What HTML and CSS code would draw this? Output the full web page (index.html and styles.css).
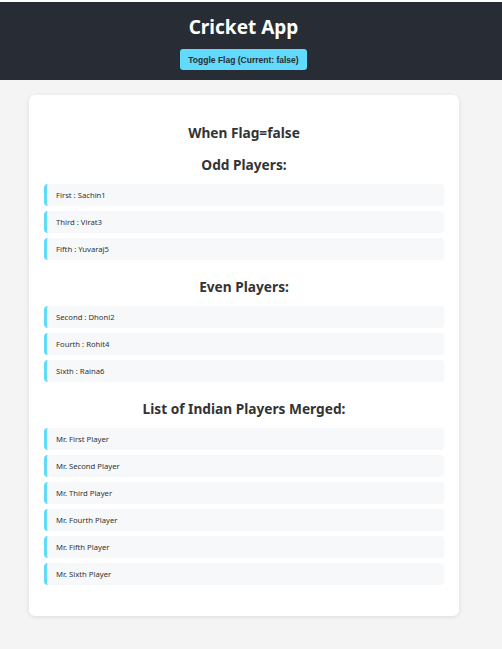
FILE: index.html
```html
<!DOCTYPE html>
<html>
<head>
<meta charset="utf-8">
<link rel="stylesheet" href="styles.css">
</head>
<body>
<header class="app-header">
  <h1 class="app-title">Cricket App</h1>
  <button class="toggle-btn">Toggle Flag (Current: false)</button>
</header>
<main class="card">
  <h3 class="flag-heading">When Flag=false</h3>
  <h3 class="section-heading first">Odd Players:</h3>
  <ul class="player-list">
    <li>First : Sachin1</li>
    <li>Third : Virat3</li>
    <li>Fifth : Yuvaraj5</li>
  </ul>
  <h3 class="section-heading">Even Players:</h3>
  <ul class="player-list">
    <li>Second : Dhoni2</li>
    <li>Fourth : Rohit4</li>
    <li>Sixth : Raina6</li>
  </ul>
  <h3 class="section-heading">List of Indian Players Merged:</h3>
  <ul class="player-list">
    <li>Mr. First Player</li>
    <li>Mr. Second Player</li>
    <li>Mr. Third Player</li>
    <li>Mr. Fourth Player</li>
    <li>Mr. Fifth Player</li>
    <li>Mr. Sixth Player</li>
  </ul>
</main>
</body>
</html>
```
FILE: styles.css
```css
html, body {
  margin: 0;
  padding: 0;
}
body {
  background: #f4f4f4;
  font-family: "Noto Sans", "Open Sans", sans-serif;
  color: #333;
  border-top: 2px solid #ffffff;
  min-height: 647px;
}
.app-header {
  background: #282c34;
  height: 78px;
  padding-right: 15px;
  display: flex;
  flex-direction: column;
  align-items: center;
}
.app-title {
  margin: 13px 0 0;
  font-size: 19px;
  line-height: 24px;
  font-weight: 700;
  color: #ffffff;
}
.toggle-btn {
  margin-top: 10px;
  height: 21px;
  width: 127px;
  padding: 0;
  border: none;
  border-radius: 3px;
  background: #61dafb;
  color: #282c34;
  font-family: "Liberation Sans", Arial, sans-serif;
  font-size: 8.5px;
  font-weight: 700;
}
.card {
  display: block;
  width: 430px;
  box-sizing: border-box;
  margin: 15px 0 0 29px;
  padding: 28px 15px 31px;
  background: #ffffff;
  border-radius: 6px;
  box-shadow: 0 1px 4px rgba(0, 0, 0, 0.1);
}
.flag-heading, .section-heading {
  margin: 0;
  text-align: center;
  font-size: 13.7px;
  line-height: 20px;
  font-weight: 700;
  color: #333;
}
.section-heading {
  margin-top: 17px;
  margin-bottom: 9px;
}
.section-heading.first {
  margin-top: 12px;
}
.player-list {
  list-style: none;
  margin: 0;
  padding: 0;
  display: flex;
  flex-direction: column;
  gap: 5px;
}
.player-list li {
  height: 22px;
  box-sizing: border-box;
  display: flex;
  align-items: center;
  padding-left: 9px;
  background: #f7f8fa;
  border-left: 3px solid #61dafb;
  border-radius: 4px;
  font-size: 7.7px;
  color: #333;
}
```
